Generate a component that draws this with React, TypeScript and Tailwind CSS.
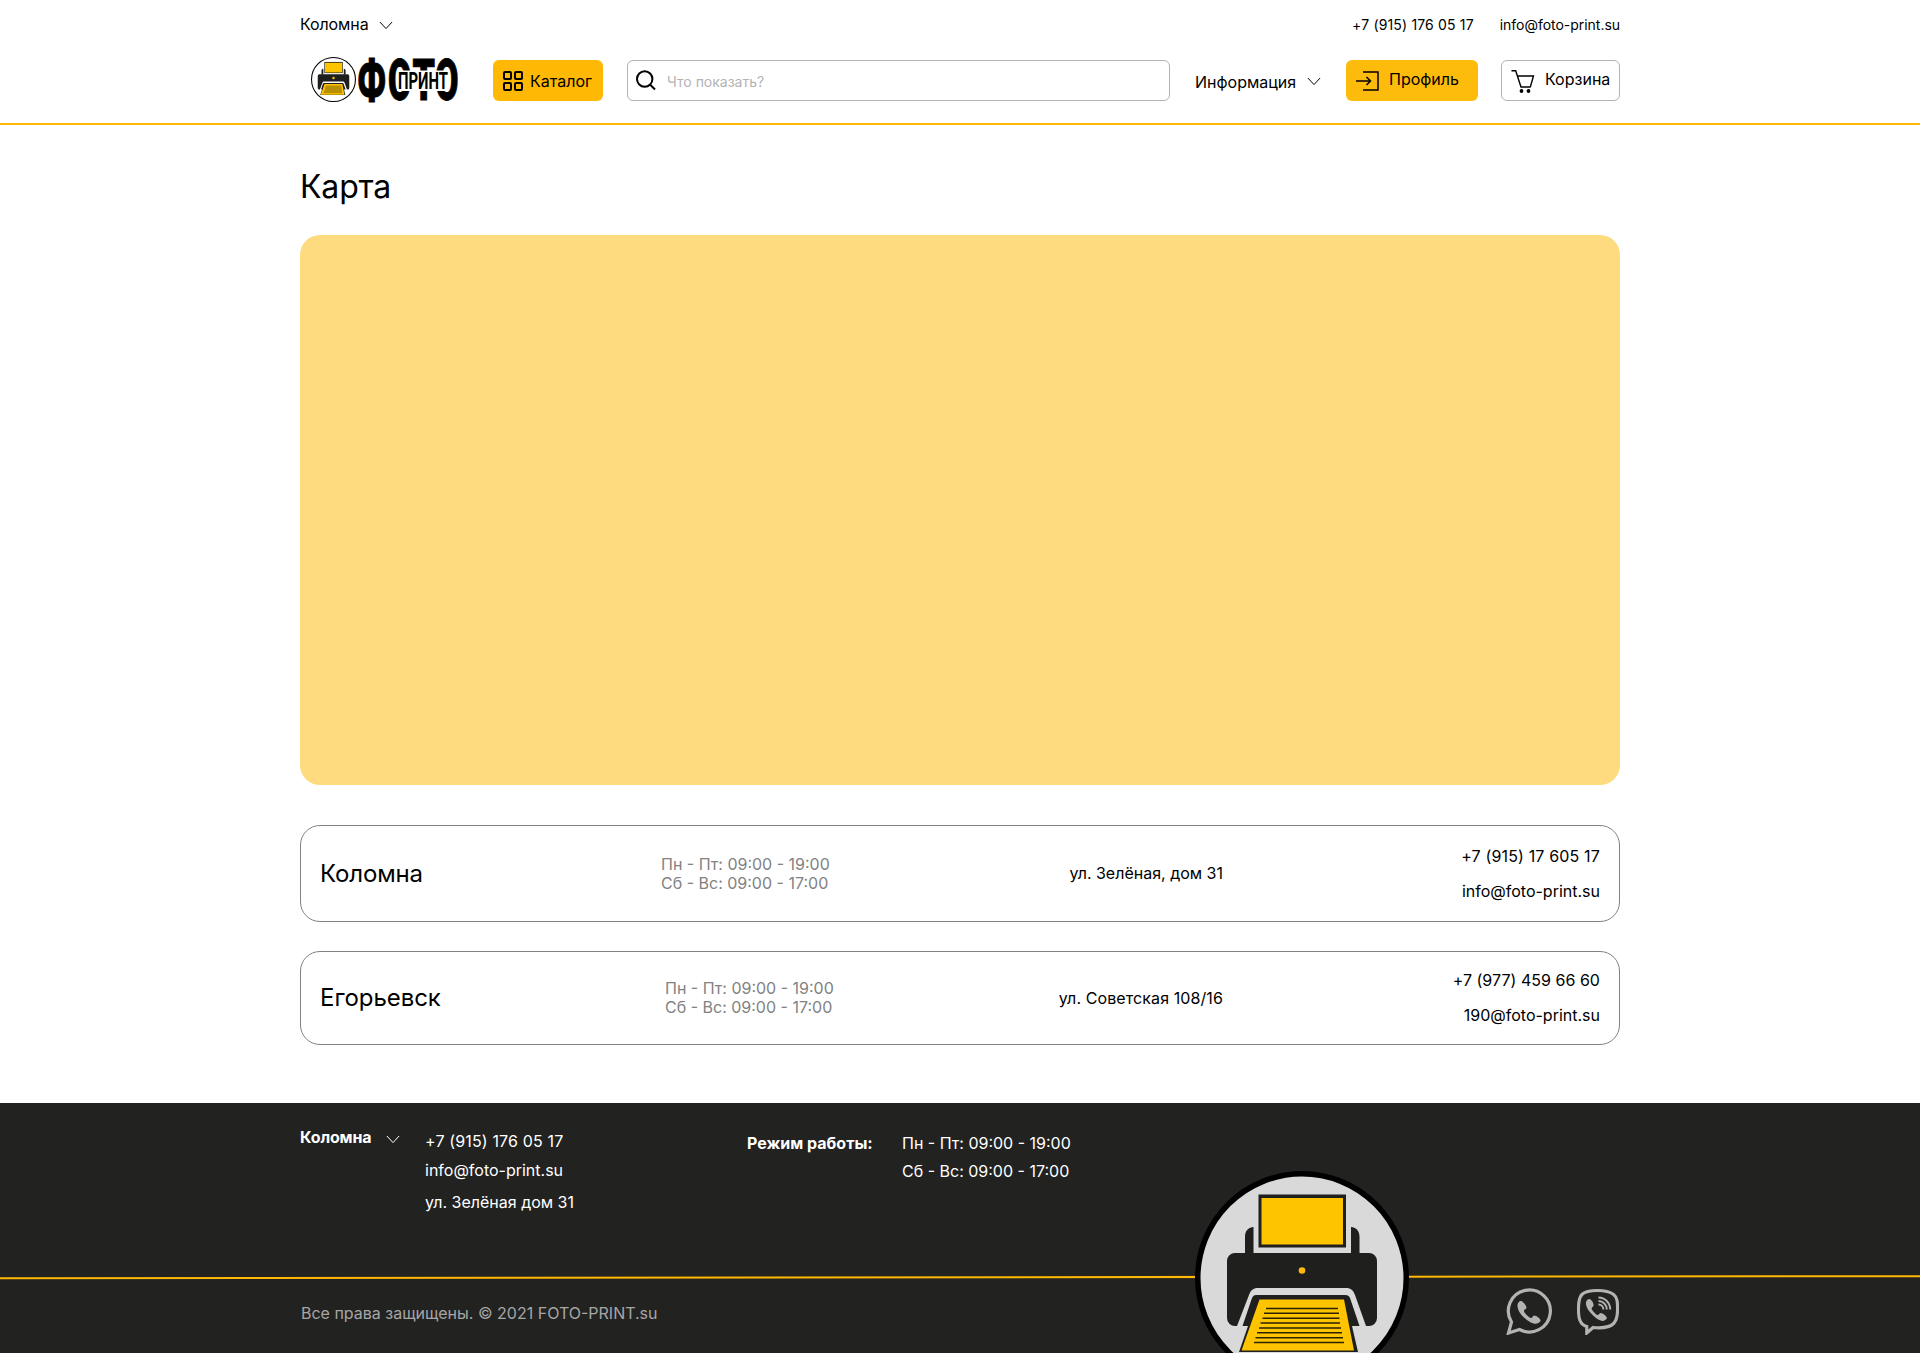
import React from "react";

const hours = ["Пн - Пт: 09:00 - 19:00", "Сб - Вс: 09:00 - 17:00"];

function Chevron({ className = "" }: { className?: string }) {
  return (
    <svg className={className} width="14" height="9" viewBox="0 0 14 9" fill="none" stroke="currentColor" strokeWidth="1">
      <path d="M0.9 1 7 7.6 13.1 1" />
    </svg>
  );
}

type PrinterProps = { className: string; stroke: number; fill: string; lines?: boolean };

function Printer({ className, stroke, fill, lines = false }: PrinterProps) {
  return (
    <svg className={className} viewBox="0 0 214 214">
      <circle cx="107" cy="107" r={107 - stroke / 2} fill={fill} stroke="#000" strokeWidth={stroke} />
      <g fill="#1f1f1d">
        <path d="M50 83V66c0-6 3-9.500 8.500-10V83zM164.500 83V66c0-6-3-9.500-8.500-10V83z" />
        <path d="M40 82H174a8 8 0 0 1 8 8V147a8 8 0 0 1-8 8H171L160 124c-2-5-4-7-9-7H63c-5 0-7 2-9 7L42 155H40a8 8 0 0 1-8-8V90a8 8 0 0 1 8-8z" />
        <path d="M63.500 23.500H151V76.500H63.500z" />
        <path d="M61 124H150c3 0 4 1 5 3L164.500 155H157L163 181H44L53 155H47.500L57 127c1-2 2-3 4-3z" />
      </g>
      <path d="M66.500 27H148V73.500H66.500zM64.500 128.500H149L159 179.500H46.500z" fill="#fec400" />
      <circle cx="107" cy="99.500" r={lines ? 3.3 : 6} fill="#fdb90c" />
      {lines ? (
        <path d="M71 137.500H143M69 142.300H144M67.500 147.300H144.500M65.500 152H145M64 157H146M62 161.800H147M60.500 166.700H148M59 171.500H149" stroke="#2a2200" strokeWidth="1.500" />
      ) : (
        <path d="M71 136H143L149 172H59z" fill="#b98f06" />
      )}
    </svg>
  );
}

function Logo() {
  return (
    <div className="ml-[11px] flex items-center">
      <Printer className="mb-0.5 h-[45px] w-[45px] shrink-0" stroke={5} fill="#fff" />
      <svg className="-my-5 ml-px h-[86px] w-[106px] shrink-0" viewBox="357 37.500 106 86" fontFamily="Roboto, sans-serif" fontWeight="900">
        <g fontSize="57" stroke="#000" strokeWidth="1">
          <text y="99.800" x="357.500" textLength="28.500" lengthAdjust="spacingAndGlyphs">Ф</text>
          <text y="99.800" x="388" textLength="23.500" lengthAdjust="spacingAndGlyphs">О</text>
          <text y="99.800" x="412.500" textLength="22.500" lengthAdjust="spacingAndGlyphs">Т</text>
          <text y="99.800" x="435" textLength="23.500" lengthAdjust="spacingAndGlyphs">О</text>
        </g>
        <rect x="397" y="70" width="52" height="20.500" fill="#fff" />
        <text x="398" y="88.500" fontSize="24" fontWeight="700" textLength="50" lengthAdjust="spacingAndGlyphs">ПРИНТ</text>
      </svg>
    </div>
  );
}

function Header() {
  return (
    <header className="h-[125px] border-b-2 border-[#ffb803]">
      <div className="mx-auto w-[1320px]">
        <div className="flex h-[49px] items-center">
          <button className="mb-px flex items-center text-base tracking-[-0.1px]">Коломна<Chevron className="ml-[10px] mt-[3px]" /></button>
          <div className="ml-auto flex gap-[26px] text-sm">
            <span className="tracking-[0.16px]">+7 (915) 176 05 17</span>
            <span className="tracking-[-0.03px]">info@foto-print.su</span>
          </div>
        </div>
        <div className="flex h-[63px] items-center">
          <Logo />
          <button className="ml-[30px] flex h-[41px] w-[110px] items-center rounded-md bg-[#ffb803] pl-2.5">
            <svg width="20" height="20" viewBox="0 0 20 20" fill="none" stroke="#000" strokeWidth="2">
              <rect x="1" y="1" width="7" height="7" rx="1" />
              <rect x="12" y="1" width="7" height="7" rx="1" />
              <rect x="1" y="12" width="7" height="7" rx="1" />
              <rect x="12" y="12" width="7" height="7" rx="1" />
            </svg>
            <span className="ml-[7px]">Каталог</span>
          </button>
          <div className="ml-6 flex h-[41px] w-[543px] items-center rounded-md border border-[#b3b3b3] pl-2">
            <svg width="20" height="21" viewBox="0 0 20 21" fill="none" stroke="#000" strokeWidth="2">
              <circle cx="8.700" cy="9" r="7.700" />
              <path d="m14 14.500 5 5" />
            </svg>
            <span className="ml-[11px] mt-0.5 text-sm text-[#b3b3b3]">Что показать?</span>
          </div>
          <button className="ml-[25px] mt-0.5 flex items-center">Информация<Chevron className="ml-[11px]" /></button>
          <button className="ml-auto flex h-[41px] w-[132px] items-center rounded-md bg-[#fdbb0c] pl-2.5">
            <svg width="23" height="20" viewBox="0 0 23 20" fill="none" stroke="#000" strokeWidth="1.500">
              <path d="M7 1H22V19H7M0 10H14.500M10.500 6 14.500 10 10.500 14" />
            </svg>
            <span className="mb-[3px] ml-[10px]">Профиль</span>
          </button>
          <button className="ml-[23px] flex h-[41px] w-[119px] items-center rounded-md border border-[#b3b3b3] pl-[9px]">
            <svg width="24" height="24" viewBox="0 0 24 24" fill="none" stroke="#000" strokeWidth="1.400">
              <path d="M.5 1.700H4.700L10 18H19.500M5.800 7H22.500L19.300 18" />
              <circle cx="10.500" cy="22" r="1.900" fill="#000" stroke="none" />
              <circle cx="17.500" cy="22" r="1.900" fill="#000" stroke="none" />
            </svg>
            <span className="mb-[3px] ml-[10px]">Корзина</span>
          </button>
        </div>
      </div>
    </header>
  );
}

type OfficeProps = {
  city: string;
  cityClass: string;
  address: string;
  addressClass?: string;
  phone: string;
  phoneClass: string;
  email: string;
  className: string;
};

function Office({ city, cityClass, address, addressClass = "", phone, phoneClass, email, className }: OfficeProps) {
  return (
    <article className={`flex items-center rounded-[20px] border border-[#828282] px-[19px] ${className}`}>
      <h2 className={`text-2xl ${cityClass}`}>{city}</h2>
      <div className="leading-[19px] text-[#828282]">
        {hours.map((h) => <p key={h}>{h}</p>)}
      </div>
      <p className={`mb-px ml-auto ${addressClass}`}>{address}</p>
      <div className="flex w-[377px] flex-col gap-4 text-right leading-[19px]">
        <p className={phoneClass}>{phone}</p>
        <p>{email}</p>
      </div>
    </article>
  );
}

function Footer() {
  return (
    <footer className="relative h-[250px] overflow-hidden bg-[#222221] text-white">
      <svg className="absolute left-0 top-[172px]" width="1920" height="5" viewBox="0 0 1920 5">
        <path d="M0 3.200 1920 1.200" stroke="#ffb803" strokeWidth="2" />
      </svg>
      <Printer className="absolute left-[1195px] top-[68px] h-[214px] w-[214px]" stroke={5.5} fill="#d9d9d9" lines />
      <div className="mx-auto flex h-[173px] w-[1320px] items-start leading-[19px]">
        <button className="mt-[25px] flex w-[125px] items-center font-bold tracking-[-0.15px]">Коломна<Chevron className="ml-[15px] mt-1" /></button>
        <div className="w-[322px]">
          <p className="mt-[29px] tracking-[0.15px]">+7 (915) 176 05 17</p>
          <p className="mt-[10px]">info@foto-print.su</p>
          <p className="mt-[13px]">ул. Зелёная дом 31</p>
        </div>
        <p className="mt-[31px] w-[155px] font-bold">Режим работы:</p>
        <div className="mt-[31px] flex flex-col gap-[9px]">
          {hours.map((h) => <p key={h}>{h}</p>)}
        </div>
      </div>
      <div className="mx-auto flex h-[77px] w-[1320px] items-start">
        <p className="ml-px mt-[25px] text-[#a6a6a6]">Все права защищены. © 2021 FOTO-PRINT.su</p>
        <div className="ml-auto mt-3 flex pr-px">
          <svg width="47" height="47" viewBox="0 0 47 47" fill="none" stroke="#b3b3b3" strokeWidth="3.200">
            <path d="M2.500 45 5.500 34A21 21 0 1 1 13.500 41.500z" />
            <path d="M14 13c-5 3-2 11 4 16.500s13 9 16.500 3.500c1-2-5-6-6.500-5.500s-1.500 2.500-3 2.500-7-5-7-7 2.500-1.500 2.500-3.500-4-7.500-6.500-6.500z" fill="#b3b3b3" stroke="none" />
          </svg>
          <svg className="ml-6" width="42" height="47" viewBox="0 0 43 47" preserveAspectRatio="none" fill="none" stroke="#b3b3b3" strokeWidth="3.200">
            <path d="M21 2.500c-8 0-13 1-16 4s-3.500 8-3.500 15c0 9 1.500 15 8.500 17v6.500l6.500-5.500c11 1 18-1 21-4s4-7 4-14 0-12-4-15-8-4-16.500-4z" />
            <path d="M12 11c-5 2-3 9 3 15s12 9.500 15.500 4.500c1-2-5-6-6.500-5.500s-1.500 2-3 2-6-5-6-6.500 2-1.500 2-3.500-2.500-6.500-5-6z" fill="#b3b3b3" stroke="none" />
            <path d="M22 16.500a5 5 0 0 1 5 5M22 13a8.500 8.500 0 0 1 8.500 8.500M22 9.500a12 12 0 0 1 12 12" strokeWidth="2" />
          </svg>
        </div>
      </div>
    </footer>
  );
}

export default function App() {
  return (
    <div className="min-h-[1353px] bg-white text-base text-black [font-family:Inter,sans-serif]">
      <Header />
      <main className="mx-auto h-[978px] w-[1320px] pt-[42px]">
        <h1 className="text-[32px] leading-[39px] tracking-[-0.15px]">Карта</h1>
        <div className="mt-[29px] h-[550px] rounded-[20px] bg-[#fddb7e]" />
        <Office className="mt-10 h-[97px]" city="Коломна" cityClass="w-[341px] tracking-[-0.15px]" address="ул. Зелёная, дом 31" phone="+7 (915) 17 605 17" phoneClass="tracking-[0.16px]" email="info@foto-print.su" />
        <Office className="mt-[29px] h-[94px]" city="Егорьевск" cityClass="w-[345px] tracking-[-0.05px]" address="ул. Советская 108/16" addressClass="tracking-[0.1px]" phone="+7 (977) 459 66 60" phoneClass="tracking-[0.03px]" email="190@foto-print.su" />
      </main>
      <Footer />
    </div>
  );
}
